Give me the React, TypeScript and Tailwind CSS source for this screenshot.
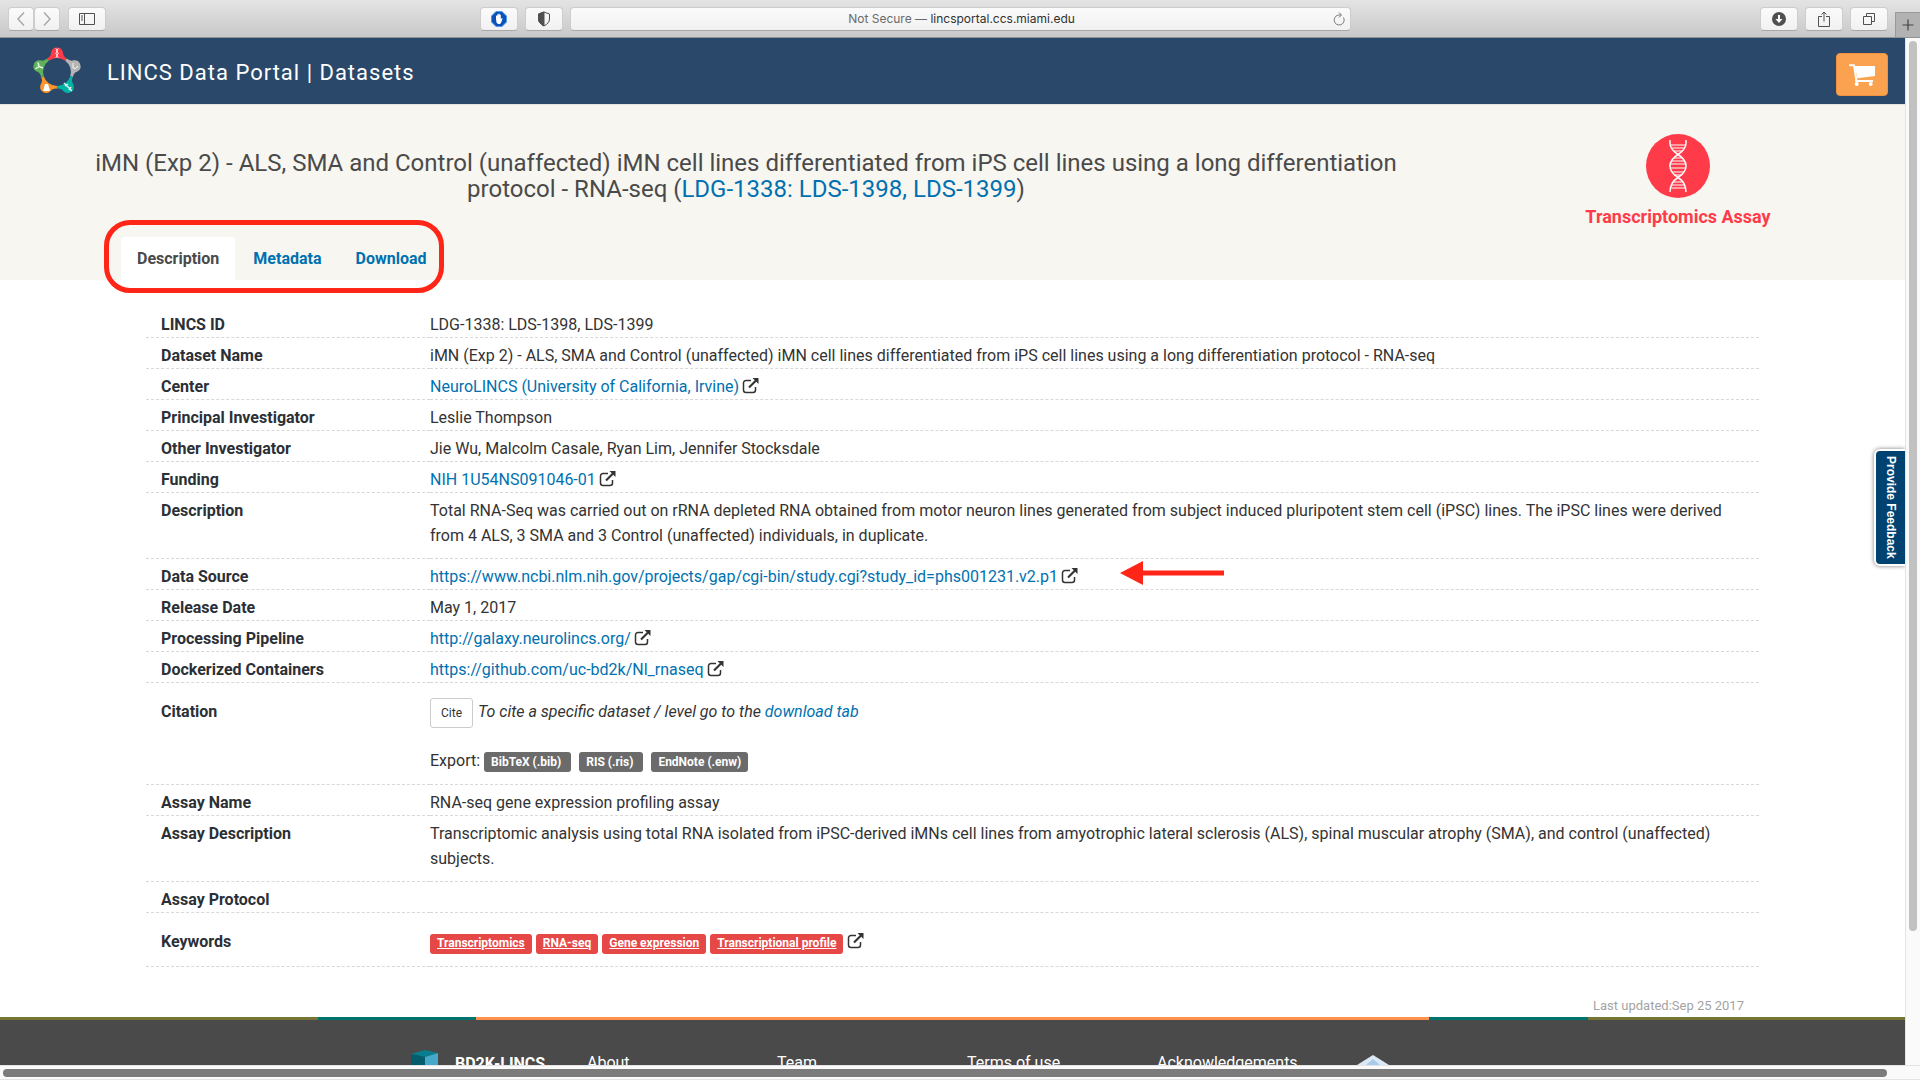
import React from "react";

function ExternalIcon() {
  return (
    <svg viewBox="0 0 18 16" className="-ml-px inline-block h-4 w-[18px] align-[-2px]" fill="none" stroke="currentColor" aria-label="external link" role="img">
      <path d="M9 2.5H4A2.5 2.5 0 0 0 1.5 5v7A2.5 2.5 0 0 0 4 14.500h7a2.500 2.500 0 0 0 2.500-2.500V9" strokeWidth="1.500" />
      <path d="M7 9.500 14 2.500" strokeWidth="2.200" />
      <path d="M10.500 0H16.500V6Z" fill="currentColor" stroke="none" />
    </svg>
  );
}

const logoNodes = [
  { color: "#ff3b4a", angle: 0 },
  { color: "#b5b5b5", angle: 72 },
  { color: "#00b3a4", angle: 144 },
  { color: "#f9952c", angle: 216 },
  { color: "#5fb25a", angle: 288 },
];

function LincsLogo() {
  return (
    <svg viewBox="0 0 52 50" className="h-[50px] w-[52px]" aria-label="LINCS" role="img">
      {logoNodes.map((n) => (
        <path
          key={n.color}
          transform={`translate(26 26) rotate(${n.angle})`}
          d="M-9.700-13.600Q-6-15.500-5.900-19.500A6 6 0 0 1 5.900-19.500Q6-15.500 9.700-13.600L8.200-11.300A14 14 0 0 0-8.200-11.300Z"
          fill={n.color}
        />
      ))}
      <g stroke="#fff" strokeOpacity=".85" fill="none" strokeWidth="1">
        <path d="M24.500 2.500q4 2.500 0 5 4 2 0 4M27.500 2.500q-4 2.500 0 5-4 2 0 4" />
        <path d="M42 17v5q3 2 5-2" />
        <path d="m33 37 8 8M34 40l3-2M38 44l2-3" strokeWidth="1.500" />
        <path d="M14 38h3l2 7h-7z" fill="#fff" stroke="none" />
        <path d="M4.500 23 8 20.500 12 22M8 20.500 7 16.500" strokeWidth="1.500" />
      </g>
    </svg>
  );
}

function CartIcon() {
  return (
    <svg viewBox="0 0 26 22" className="h-[22px] w-[26px]" aria-hidden="true">
      <path d="M1 1.200H5L7.500 17" fill="none" stroke="#fff" strokeWidth="2" strokeLinecap="round" strokeLinejoin="round" />
      <path d="M5.500 2H26V12L8.500 14.200Z" fill="#fff" />
      <path d="M6.500 16H24v2H6.500Z" fill="#fff" />
      <circle cx="7.700" cy="20" r="2" fill="#fff" />
      <circle cx="21.700" cy="20" r="2" fill="#fff" />
    </svg>
  );
}

function DnaIcon() {
  return (
    <svg viewBox="0 0 64 64" className="h-16 w-16" aria-hidden="true">
      <circle cx="32" cy="32" r="32" fill="#ff3b4a" />
      <g fill="none" stroke="#fff" strokeWidth="1.500">
        <path d="M24 6v3c0 6 4 9 8 11.500s8 5.500 8 11.500-4 9-8 11.500-8 6.500-8 14.500" />
        <path d="M40 6v3c0 6-4 9-8 11.500S24 26 24 32s4 9 8 11.500 8 6.500 8 14.500" />
        <path d="M25 11h14M26 14h12M28 17h8M28 24h8M26 27h12M25 30h14M25 34h14M26 38h12M28 41h8M28 48h8M26 51h12M25 54h14" strokeWidth="1" />
      </g>
    </svg>
  );
}

const toolButton =
  "flex h-6 shrink-0 items-center justify-center rounded border border-[#cdcdcd] border-b-[#a8a8a8] bg-linear-to-b from-[#fbfbfb] to-[#f1f1f1] text-[#505050]";

function BrowserBar() {
  return (
    <header className="flex h-[38px] shrink-0 items-center border-b border-[#8e9299] bg-linear-to-b from-[#e4e4e4] to-[#c8c8c8] pt-px pl-2">
      <div className="flex w-[472px] shrink-0 items-center">
        <button aria-label="Back" className={toolButton + " w-[26px]"}>
          <svg viewBox="0 0 12 16" className="h-4 w-3" fill="none" stroke="#a8a8a8" strokeWidth="1.500"><path d="M9 1.500 3 8l6 6.500" /></svg>
        </button>
        <button aria-label="Forward" className={toolButton + " w-[26px]"}>
          <svg viewBox="0 0 12 16" className="h-4 w-3" fill="none" stroke="#a8a8a8" strokeWidth="1.500"><path d="m3 1.500 6 6.500-6 6.500" /></svg>
        </button>
        <button aria-label="Sidebar" className={toolButton + " ml-2 w-[38px]"}>
          <svg viewBox="0 0 16 14" className="h-[14px] w-4" fill="none" stroke="currentColor"><path d="M.5 1.500h15v11H.5zM5.500 1.500v11M2 4h2M2 6h2M2 8h2" /></svg>
        </button>
      </div>
      <div className="flex flex-1 items-center">
        <button aria-label="Blocker" className={toolButton + " w-[38px]"}>
          <svg viewBox="0 0 16 16" className="h-4 w-4">
            <path d="M5 .5h6L15.500 5v6L11 15.500H5L.5 11V5z" fill="#0a52b5" stroke="#4a97f5" />
            <path d="M5 8V5.200a.6.6 0 0 1 1.200 0V3.800a.6.6 0 0 1 1.200 0V3.200a.6.6 0 0 1 1.200 0v.8a.6.6 0 0 1 1.200 0V8l.9-.8c.6-.3 1 .1.8.6L10 12l-1 1H7l-1.500-1.500z" fill="#fff" />
          </svg>
        </button>
        <button aria-label="Privacy report" className={toolButton + " ml-[7px] w-[38px]"}>
          <svg viewBox="0 0 12 16" className="h-4 w-3" fill="none" stroke="currentColor"><path d="M6 1 11.500 3V8c0 3-2 5-5.500 7C2.500 13 .5 11 .5 8V3z" /><path d="M6 1v14C2.500 13 .5 11 .5 8V3z" fill="currentColor" /></svg>
        </button>
        <div className="ml-[7px] flex h-6 flex-1 items-center rounded border border-[#cdcdcd] border-b-[#a8a8a8] bg-linear-to-b from-[#fbfbfb] to-[#f1f1f1] px-1 font-[Inter] text-xs">
          <p className="flex-1 pl-4 text-center text-[#6a6a6a]">Not Secure — <span className="text-[#303030]">lincsportal.ccs.miami.edu</span></p>
          <button aria-label="Reload" className="text-[#777]">
            <svg viewBox="0 0 14 14" className="h-[14px] w-[14px]" fill="none" stroke="currentColor"><path d="M11.500 5.500a5 5 0 1 1-4-2.500H9M7 .5 9.500 3 7 5.500" /></svg>
          </button>
        </div>
      </div>
      <div className="flex w-[569px] shrink-0 items-center justify-end self-stretch">
        <button aria-label="Downloads" className={toolButton + " w-[38px]"}>
          <svg viewBox="0 0 14 14" className="h-[14px] w-[14px]"><circle cx="7" cy="7" r="7" fill="#505050" /><path d="M6 3h2v4h2.500L7 11 3.500 7H6z" fill="#fff" /></svg>
        </button>
        <button aria-label="Share" className={toolButton + " ml-[7px] w-[38px]"}>
          <svg viewBox="0 0 14 16" className="h-4 w-[14px]" fill="none" stroke="currentColor"><path d="M5 5.500H1.500v10h11v-10H9M7 10.500V1M4.500 3.500 7 1l2.500 2.500" /></svg>
        </button>
        <button aria-label="Tabs" className={toolButton + " ml-[7px] w-[38px]"}>
          <svg viewBox="0 0 14 14" className="h-[14px] w-[14px]" fill="none" stroke="currentColor"><path d="M1.500 4.500h8v8h-8zM4.500 4.500v-3h8v8h-3" /></svg>
        </button>
        <button aria-label="New tab" className="ml-[7px] flex h-[25px] w-[25px] items-center justify-center self-end border-l border-t border-[#999] bg-[#b2b2b2]">
          <svg viewBox="0 0 12 12" className="h-3 w-3" stroke="#444" strokeWidth="1.200"><path d="M6 .5v11M.5 6h11" /></svg>
        </button>
      </div>
    </header>
  );
}

function Link({ children }: { children: React.ReactNode }) {
  return <a href="#" className="text-[#0071b0]">{children}</a>;
}

function External({ children }: { children: React.ReactNode }) {
  return <><Link>{children}</Link> <ExternalIcon /></>;
}

const exportsList = ["BibTeX (.bib)", "RIS (.ris)", "EndNote (.enw)"];
const keywords = ["Transcriptomics", "RNA-seq", "Gene expression", "Transcriptional profile"];

const rows: { label: string; value: React.ReactNode; pad?: string }[] = [
  { label: "LINCS ID", value: "LDG-1338: LDS-1398, LDS-1399" },
  { label: "Dataset Name", value: "iMN (Exp 2) - ALS, SMA and Control (unaffected) iMN cell lines differentiated from iPS cell lines using a long differentiation protocol - RNA-seq" },
  { label: "Center", value: <External>NeuroLINCS (University of California, Irvine)</External> },
  { label: "Principal Investigator", value: "Leslie Thompson" },
  { label: "Other Investigator", value: "Jie Wu, Malcolm Casale, Ryan Lim, Jennifer Stocksdale" },
  { label: "Funding", value: <External>NIH 1U54NS091046-01</External> },
  { label: "Description", value: "Total RNA-Seq was carried out on rRNA depleted RNA obtained from motor neuron lines generated from subject induced pluripotent stem cell (iPSC) lines. The iPSC lines were derived from 4 ALS, 3 SMA and 3 Control (unaffected) individuals, in duplicate.", pad: "pt-[5px] pb-[10px]" },
  {
    label: "Data Source",
    value: (
      <span className="relative">
        <External>https://www.ncbi.nlm.nih.gov/projects/gap/cgi-bin/study.cgi?study_id=phs001231.v2.p1</External>
        <svg viewBox="0 0 104 24" className="absolute -top-[6px] left-full ml-[41px] h-6 w-[104px]" fill="#ff2617" aria-hidden="true">
          <path d="M0 12 23 0v9.500h81v5H23V24z" />
        </svg>
      </span>
    ),
  },
  { label: "Release Date", value: "May 1, 2017" },
  { label: "Processing Pipeline", value: <External>http://galaxy.neurolincs.org/</External> },
  { label: "Dockerized Containers", value: <External>https://github.com/uc-bd2k/Nl_rnaseq</External> },
  {
    label: "Citation",
    pad: "pt-4 pb-[11px]",
    value: (
      <div className="flex flex-col gap-5">
        <div className="flex gap-[5px]">
          <button className="-mt-px h-[30px] rounded-[3px] border border-[#ccc] bg-white px-[10px] text-xs">Cite</button>
          <em>To cite a specific dataset / level go to the <Link>download tab</Link></em>
        </div>
        <div className="flex items-center">
          <span className="mr-1">Export:</span>
          <div className="flex gap-2">
            {exportsList.map((e) => (
              <button key={e} className="mt-[2px] h-5 rounded-[3px] bg-[#6b6b6b] pr-[10px] pl-[7px] text-xs leading-[18px] font-bold text-white last:pr-[7px]">{e}</button>
            ))}
          </div>
        </div>
      </div>
    ),
  },
  { label: "Assay Name", value: "RNA-seq gene expression profiling assay" },
  { label: "Assay Description", value: "Transcriptomic analysis using total RNA isolated from iPSC-derived iMNs cell lines from amyotrophic lateral sclerosis (ALS), spinal muscular atrophy (SMA), and control (unaffected) subjects.", pad: "pt-[5px] pb-[10px]" },
  { label: "Assay Protocol", value: "" },
  {
    label: "Keywords",
    pad: "pt-4 pb-3",
    value: (
      <div className="flex gap-1">
        {keywords.map((k) => (
          <a key={k} href="#" className="mt-[5px] h-5 rounded-[3px] bg-[#e64848] px-[7px] text-xs leading-[18px] font-bold text-white underline">{k}</a>
        ))}
        <span className="pl-px"><ExternalIcon /></span>
      </div>
    ),
  },
];

export default function App() {
  return (
    <div className="flex h-screen flex-col overflow-hidden bg-white font-[Roboto,sans-serif] text-base leading-[25px] text-[#333]">
      <BrowserBar />
      <div className="flex min-h-0 flex-1">
        <div className="relative flex min-w-0 flex-1 flex-col overflow-hidden">
          <nav className="flex h-[66px] shrink-0 items-center bg-[#2a486a] pr-[17px] pl-[31px]">
            <LincsLogo />
            <a href="#" className="ml-6 flex-1 pt-[2px] text-[22px] tracking-[1px] text-white">LINCS Data Portal | Datasets</a>
            <button aria-label="Cart" className="mt-[7px] flex h-[43px] w-[52px] items-center justify-center rounded border border-[#f0923f] bg-[#fba250]">
              <CartIcon />
            </button>
          </nav>

          <section className="flex h-[176px] shrink-0 border-t border-[#e3e3e0] bg-[#f7f6f1]">
            <div className="ml-[95px] flex w-[1302px] flex-col">
              <h1 className="mt-[45px] text-center text-2xl leading-[26px] text-[#4a4a4a]">
                iMN (Exp 2) - ALS, SMA and Control (unaffected) iMN cell lines differentiated from iPS cell lines using a long differentiation protocol - RNA-seq (<Link>LDG-1338: LDS-1398, LDS-1399</Link>)
              </h1>
              <div className="relative mt-auto ml-[26px] flex w-fit font-bold" role="tablist">
                <button role="tab" aria-selected="true" className="mr-px h-[43px] rounded-t bg-white px-4 text-[#4a4a4a]">Description</button>
                <button role="tab" aria-selected="false" className="h-[43px] px-[17px] text-[#0071b0]">Metadata</button>
                <button role="tab" aria-selected="false" className="h-[43px] px-[17px] text-[#0071b0]">Download</button>
                <span className="pointer-events-none absolute -top-[17px] right-0 -bottom-[13px] -left-[17px] rounded-[26px] border-[5px] border-[#ff2617]" />
              </div>
            </div>
            <div className="flex flex-1 flex-col items-center pt-[29px] pl-[54px]">
              <DnaIcon />
              <p className="mt-[6px] text-lg leading-[25px] font-bold text-[#ff3b4a]">Transcriptomics Assay</p>
            </div>
          </section>

          <main className="shrink-0 pt-[27px] pr-[146px] pl-[146px]">
            <table className="w-full table-fixed border-collapse">
              <tbody>
                {rows.map((r) => (
                  <tr key={r.label} className="border-b border-dashed border-[#d8d8d8]">
                    <th scope="row" className={"w-[284px] pl-[15px] text-left align-top font-bold text-[#2b3036] " + (r.pad ?? "pt-[5px]")}>{r.label}</th>
                    <td className={"pr-4 align-top " + (r.pad ?? "pt-[5px]")}>{r.value}</td>
                  </tr>
                ))}
              </tbody>
            </table>
            <p className="mt-7 pr-[15px] text-right text-[13px] leading-[22px] text-[#a3a3a3]">Last updated:Sep 25 2017</p>
          </main>

          <footer className="min-h-0 flex-1 overflow-hidden bg-[#4a4a4a] text-white">
            <div className="grid h-[3px] grid-cols-12">
              <span className="col-span-2 bg-[#767634]" />
              <span className="bg-[#00756f]" />
              <span className="col-span-6 bg-[#ff914d]" />
              <span className="bg-[#00756f]" />
              <span className="col-span-2 bg-[#767634]" />
            </div>
            <div className="flex pt-[30px] pl-[411px]">
              <svg viewBox="0 0 27 32" className="h-8 w-[27px]" aria-hidden="true">
                <path d="M0 4 14 0l13 3-13 4z" fill="#087f8f" />
                <path d="M0 4l14 3v25H0z" fill="#045c6c" />
                <path d="M14 7 27 3v29H14z" fill="#47a9c9" />
              </svg>
              <strong className="mt-[1px] ml-[17px] w-[132px]">BD2K-LINCS</strong>
              <a href="#" className="w-[190px]">About</a>
              <a href="#" className="w-[190px]">Team</a>
              <a href="#" className="w-[190px]">Terms of use</a>
              <a href="#" className="w-[200px]">Acknowledgements</a>
              <svg viewBox="0 0 32 32" className="mt-[5px] h-8 w-8" aria-hidden="true">
                <path d="M16 0 32 10v22H0V10z" fill="#dbe8f6" />
                <path d="M16 4 23 10H9z" fill="#a9cbe9" />
              </svg>
            </div>
          </footer>

          <button className="absolute top-[411px] right-0 flex h-[117px] w-[31px] items-center justify-center rounded-l-md border-2 border-r-0 border-white bg-[#004370] font-[Liberation_Sans] text-xs font-bold text-white shadow-[0_0_4px_#777] [writing-mode:vertical-rl]">
            Provide Feedback
          </button>
        </div>
        <div className="w-[15px] shrink-0 border-l border-[#e4e4e4] bg-[#fafafa] pt-[3px]">
          <div className="ml-[3px] h-[890px] w-2 rounded-full bg-[#c1c1c1]" />
        </div>
      </div>
      <div className="h-[15px] shrink-0 border-t border-b border-[#e4e4e4] bg-[#fafafa] pt-[3px] pr-[33px] pl-[3px]">
        <div className="h-2 rounded-full bg-[#7b7b7b]" />
      </div>
    </div>
  );
}
